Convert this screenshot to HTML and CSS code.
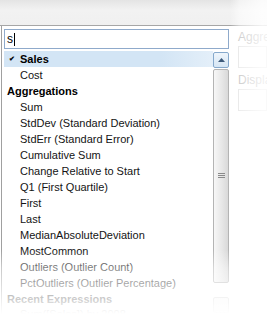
FILE: index.html
```html
<!DOCTYPE html>
<html lang="en">
<head>
  <meta charset="UTF-8" />
  <title>Expression picker</title>
  <link rel="stylesheet" href="styles.css">
</head>
<body>
  <div class="dialog">
    <div class="titlebar"></div>
    <div class="content">
      <div class="dropdown">
        <div class="search"><span>s</span><i class="caret"></i></div>
        <div class="listwrap">
          <ul class="list">
            <li class="item selected"><span class="check">&#10004;</span>Sales</li>
            <li class="item">Cost</li>
            <li class="group">Aggregations</li>
            <li class="item">Sum</li>
            <li class="item">StdDev (Standard Deviation)</li>
            <li class="item">StdErr (Standard Error)</li>
            <li class="item">Cumulative Sum</li>
            <li class="item">Change Relative to Start</li>
            <li class="item">Q1 (First Quartile)</li>
            <li class="item">First</li>
            <li class="item">Last</li>
            <li class="item">MedianAbsoluteDeviation</li>
            <li class="item">MostCommon</li>
            <li class="item">Outliers (Outlier Count)</li>
            <li class="item">PctOutliers (Outlier Percentage)</li>
            <li class="group">Recent Expressions</li>
            <li class="item last">Sum([Sales]) by 2008</li>
          </ul>
          <div class="scrollbar">
            <div class="btn up"><svg width="7" height="4" viewBox="0 0 7 4"><path d="M0 4 L3.5 0 L7 4 Z" fill="#3d5a7a"/></svg></div>
            <div class="thumb"><span class="grip"></span></div>
            <div class="btn down"></div>
          </div>
        </div>
      </div>
      <div class="side">
        <div class="label">Aggregation</div>
        <div class="box"></div>
        <div class="label">Display</div>
        <div class="box"></div>
      </div>
    </div>
    <div class="fade"></div>
  </div>
</body>
</html>
```
FILE: styles.css
```css
body { margin: 0; background: #fff; font-family: "Liberation Sans", Arial, sans-serif; font-size: 11px; color: #141414; overflow: hidden; }
.dialog { position: relative; width: 267px; height: 314px; overflow: hidden; }
.titlebar { height: 25px; background: linear-gradient(#e4e4e4, #f2f2f2 40%, #f0f0f0); border-bottom: 1px solid #a6a6a6; }
.content { display: flex; }
.dropdown { flex: none; margin-left: 1px; border-left: 1px solid #a0a0a0; padding: 3px 0 0 2px; width: 225px; }
.search { height: 18px; border: 1px solid #8faacb; display: flex; align-items: center; padding-left: 2px; font-size: 12px; color: #000; }
.caret { display: inline-block; width: 1px; height: 13px; background: #000; margin-left: 1px; }
.listwrap { display: flex; margin-top: 2px; height: 263px; overflow: hidden; }
.list { list-style: none; margin: 0; padding: 0; flex: 1; min-width: 0; }
.list li { height: 16px; line-height: 16px; white-space: nowrap; overflow: hidden; }
.list li.last { height: 8px; line-height: 14px; }
.item { padding-left: 16px; }
.group { font-weight: bold; padding-left: 3px; color: #000; }
.selected { background: linear-gradient(to right, #d3e5f5 75%, #e4eff9); font-weight: bold; position: relative; color: #000; }
.check { position: absolute; left: 5px; top: 0; font-size: 7px; }
.scrollbar { flex: none; width: 16px; margin-top: 1px; display: flex; flex-direction: column; gap: 1px; }
.btn { flex: none; height: 14px; border: 1px solid #86a9cc; border-radius: 2px; background: linear-gradient(#eef5fb, #d6e6f4); display: flex; align-items: center; justify-content: center; }
.btn.down { border-color: #c8c8c8; background: #f4f4f4; margin-top: 13px; }
.thumb { flex: none; height: 212px; border: 1px solid #b4b4b4; border-radius: 2px; background: linear-gradient(to right, #f7f7f7, #e6e6e6 60%, #d9d9d9); display: flex; align-items: center; justify-content: center; }
.grip { width: 7px; height: 6px; background: repeating-linear-gradient(#8a8a8a 0 1px, transparent 1px 2px); }
.side { padding: 4px 0 0 9px; flex: 1; min-width: 0; }
.label { font-size: 12px; color: #9a9a9a; height: 16px; white-space: nowrap; }
.box { height: 20px; border: 1px solid #d8d8d8; margin: 0 0 5px; }
.fade { position: absolute; inset: 0; pointer-events: none;
  background:
    linear-gradient(to bottom, rgba(255,255,255,0) 250px, rgba(255,255,255,.45) 268px, rgba(255,255,255,.62) 284px, rgba(255,255,255,.8) 299px, #fff 314px),
    linear-gradient(to right, rgba(255,255,255,0) 230px, rgba(255,255,255,.55) 240px, rgba(255,255,255,.85) 262px); }
```
